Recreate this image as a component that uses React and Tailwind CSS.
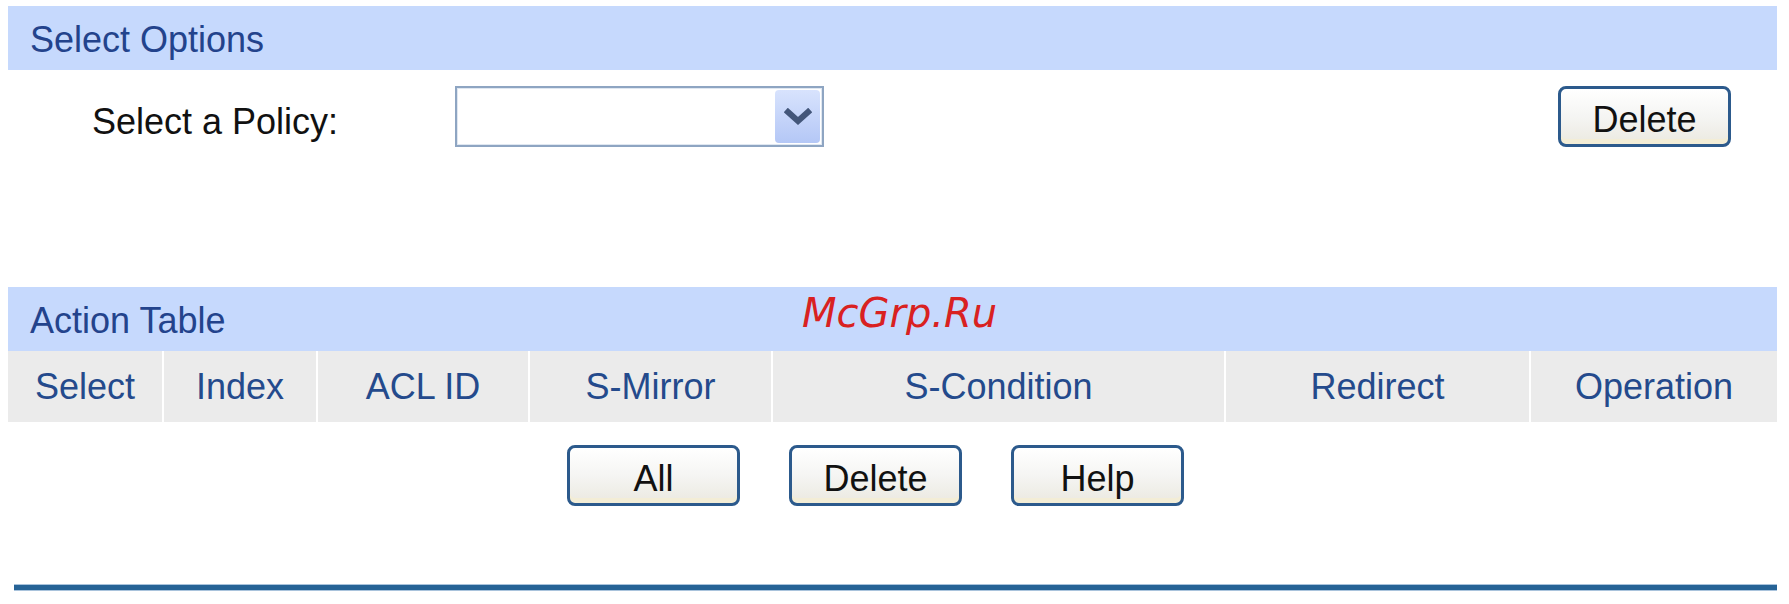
import React from 'react'

/* ─── Bits ──────────────────────────────────────────────────────────────── */

function XpButton({ children, className = '' }) {
  return (
    <button
      className={`h-[61px] w-[173px] rounded-[8px] border-[3px] border-[#2c5a8c] bg-gradient-to-b from-[#ffffff] via-[#f5f5f3] to-[#ebe9e0] pt-[6px] text-[36px] leading-none text-[#111] shadow-[inset_0_-5px_0_#f3edd6] ${className}`}
    >
      {children}
    </button>
  )
}

function SectionHeader({ title }) {
  return (
    <div className="flex h-[64px] items-center bg-[#c6d9fd] pl-[22px] pt-[4px] text-[36px] text-[#23438c]">
      {title}
    </div>
  )
}

const COLUMNS = [
  { label: 'Select', w: 'w-[154px]' },
  { label: 'Index', w: 'w-[154px]' },
  { label: 'ACL ID', w: 'w-[212px]' },
  { label: 'S-Mirror', w: 'w-[243px]' },
  { label: 'S-Condition', w: 'w-[453px]' },
  { label: 'Redirect', w: 'w-[305px]' },
  { label: 'Operation', w: 'w-[248px]' },
]

/* ─── Page ──────────────────────────────────────────────────────────────── */

export default function App() {
  return (
    <div className="relative h-[604px] w-[1789px] overflow-hidden bg-white font-['Liberation_Sans',Arial,sans-serif]">
      <div className="ml-[8px] w-[1769px] pt-[6px]">
        <SectionHeader title="Select Options" />

        {/* Policy row */}
        <div className="mt-[16px] flex h-[61px] items-center">
          <div className="w-[447px] pl-[84px] pt-[10px] text-[36px] text-[#111]">Select a Policy:</div>
          <div className="flex h-[61px] w-[369px] items-center justify-end border-2 border-[#8ea5c2] bg-white p-[2px] shadow-[inset_0_0_0_1px_#dfe7f1]">
            <div className="flex h-[53px] w-[45px] items-center justify-center rounded-[4px] bg-gradient-to-b from-[#d8e3fd] to-[#b4c7f6]">
              <svg width="28" height="18" viewBox="0 0 28 18" fill="none">
                <path d="M4 4l10 9 10-9" stroke="#43567a" strokeWidth="6" strokeLinecap="square" />
              </svg>
            </div>
          </div>
          <XpButton className="ml-auto mr-[46px]">Delete</XpButton>
        </div>

        <div className="mt-[140px]">
          <div className="relative">
            <SectionHeader title="Action Table" />
            <div className="absolute left-[794px] top-[-4px] font-['DejaVu_Sans',sans-serif] text-[40px] italic text-[#d92121]">
              McGrp.Ru
            </div>
          </div>

          {/* Table header */}
          <div className="flex h-[71px] bg-[#ebebeb]">
            {COLUMNS.map((c, i) => (
              <div
                key={c.label}
                className={`${c.w} flex items-center justify-center text-[36px] text-[#244a8c] ${i > 0 ? 'border-l-2 border-white' : ''}`}
              >
                {c.label}
              </div>
            ))}
          </div>

          {/* Actions */}
          <div className="mt-[23px] flex gap-[49px] pl-[559px]">
            <XpButton>All</XpButton>
            <XpButton>Delete</XpButton>
            <XpButton>Help</XpButton>
          </div>

          <div className="ml-[6px] mt-[78px] h-[7px] w-[1763px] border-y border-[#a9c3dc] bg-[#266396]" />
        </div>
      </div>
    </div>
  )
}
